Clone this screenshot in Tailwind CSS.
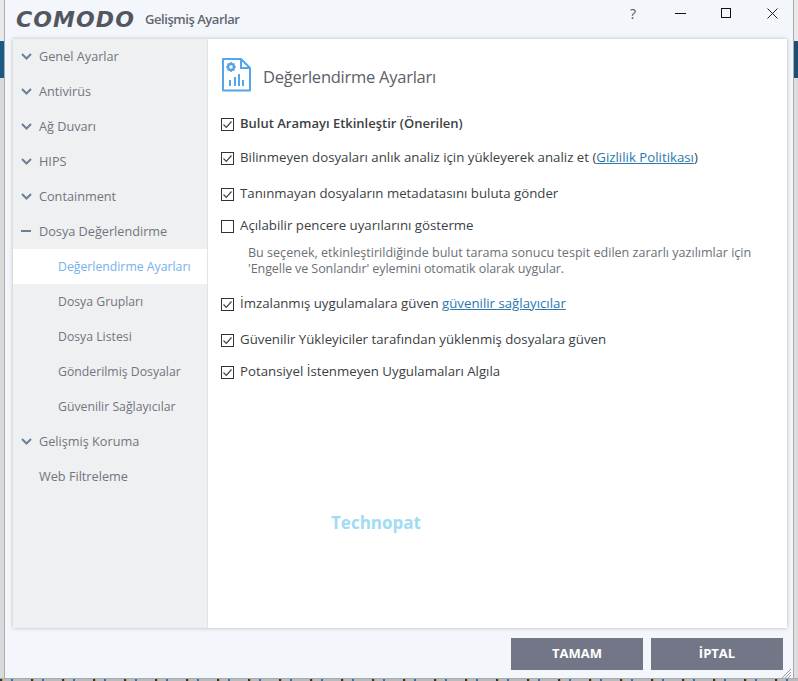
<!DOCTYPE html>
<html lang="tr">
<head>
  <meta charset="UTF-8" />
  <meta name="viewport" content="width=device-width, initial-scale=1.0" />
  <title>COMODO Gelişmiş Ayarlar</title>
  <script src="https://cdn.jsdelivr.net/npm/@tailwindcss/browser@4"></script>
</head>
<body class="bg-[#c4c6c8] font-['Open_Sans',sans-serif] overflow-hidden">
  <div class="relative w-[798px] h-[681px] flex flex-col overflow-hidden">
    <div class="flex h-[678px]">
      <!-- desktop behind the window, left -->
      <div class="w-[5px] flex flex-col shrink-0 border-r border-[#a9acaf]">
        <div class="h-[41px] bg-[#e9e9e9] border-t-[3px] border-[#e9e9e9]"></div>
        <div class="h-[37px] bg-[#1c5a85]"></div>
        <div class="flex-1 bg-[#d9dadb]"></div>
      </div>

      <!-- window -->
      <div class="relative w-[789px] bg-[#f3f7fb] flex flex-col shrink-0 border-r border-[#a9acaf]">
        <!-- title bar -->
        <div class="h-[39px] flex items-start pl-[11px] shrink-0">
          <span class="font-['DejaVu_Sans',sans-serif] font-bold italic text-[22px] leading-[39px] tracking-[1.1px] text-[#54565f]">COMODO</span>
          <span class="ml-[10px] mt-[10px] text-[13px] leading-[18px] font-semibold text-[#62666f] tracking-[-0.45px]">Gelişmiş Ayarlar</span>
          <div class="ml-auto flex items-center h-[26px] text-[#333]">
            <span class="text-[14px] text-[#555] mr-[39px]">?</span>
            <svg class="mr-[35px]" width="11" height="3" viewBox="0 0 11 3"><rect y="1" width="11" height="1" fill="#111"/></svg>
            <svg class="mr-[36px]" width="10" height="10" viewBox="0 0 10 10"><rect x="0.5" y="0.5" width="9" height="9" fill="none" stroke="#111"/></svg>
            <svg class="mr-[15px]" width="11" height="11" viewBox="0 0 11 11"><path d="M0.5 0.5L10.5 10.5M10.5 0.5L0.5 10.5" stroke="#222" fill="none"/></svg>
          </div>
        </div>

        <!-- panel -->
        <div class="ml-[8px] w-[774px] h-[589px] flex bg-white shadow-[0_0_4px_rgba(0,0,0,0.25)] shrink-0">
          <!-- sidebar -->
          <nav class="w-[195px] bg-[#eff0f2] border-r border-[#e2e3e5] text-[12.7px] text-[#71757f] shrink-0">
            <div class="h-[35px] flex items-center pl-[8px] gap-[7px]"><svg width="11" height="7" viewBox="0 0 11 7"><path d="M1 1l4.5 4.5L10 1" fill="none" stroke="#6c8093" stroke-width="2"/></svg><span>Genel Ayarlar</span></div>
            <div class="h-[35px] flex items-center pl-[8px] gap-[7px]"><svg width="11" height="7" viewBox="0 0 11 7"><path d="M1 1l4.5 4.5L10 1" fill="none" stroke="#6c8093" stroke-width="2"/></svg><span>Antivirüs</span></div>
            <div class="h-[35px] flex items-center pl-[8px] gap-[7px]"><svg width="11" height="7" viewBox="0 0 11 7"><path d="M1 1l4.5 4.5L10 1" fill="none" stroke="#6c8093" stroke-width="2"/></svg><span>Ağ Duvarı</span></div>
            <div class="h-[35px] flex items-center pl-[8px] gap-[7px]"><svg width="11" height="7" viewBox="0 0 11 7"><path d="M1 1l4.5 4.5L10 1" fill="none" stroke="#6c8093" stroke-width="2"/></svg><span>HIPS</span></div>
            <div class="h-[35px] flex items-center pl-[8px] gap-[7px]"><svg width="11" height="7" viewBox="0 0 11 7"><path d="M1 1l4.5 4.5L10 1" fill="none" stroke="#6c8093" stroke-width="2"/></svg><span>Containment</span></div>
            <div class="h-[35px] flex items-center pl-[8px] gap-[7px]"><svg width="11" height="7" viewBox="0 0 11 7"><rect y="2" width="10" height="2" fill="#6c8093"/></svg><span>Dosya Değerlendirme</span></div>
            <div class="h-[35px] flex items-center pl-[45px] pt-[1px] bg-white text-[#76b0ee] text-[12.25px]">Değerlendirme Ayarları</div>
            <div class="h-[35px] flex items-center pl-[45px] pt-[1px] text-[12.25px]">Dosya Grupları</div>
            <div class="h-[35px] flex items-center pl-[45px] pt-[1px] text-[12.25px]">Dosya Listesi</div>
            <div class="h-[35px] flex items-center pl-[45px] pt-[1px] text-[12.25px]">Gönderilmiş Dosyalar</div>
            <div class="h-[35px] flex items-center pl-[45px] pt-[1px] text-[12.25px]">Güvenilir Sağlayıcılar</div>
            <div class="h-[35px] flex items-center pl-[8px] gap-[7px]"><svg width="11" height="7" viewBox="0 0 11 7"><path d="M1 1l4.5 4.5L10 1" fill="none" stroke="#6c8093" stroke-width="2"/></svg><span>Gelişmiş Koruma</span></div>
            <div class="h-[35px] flex items-center pl-[26px]">Web Filtreleme</div>
          </nav>

          <!-- content -->
          <section class="flex-1 pl-[13px] pt-[19px] text-[13.25px] text-[#3c3f44]">
            <div class="flex items-center h-[34px]">
              <svg class="shrink-0" width="30" height="34" viewBox="0 0 30 34">
                <path d="M2 1H20L29 10V32.500H2Z" fill="none" stroke="#55a5ec" stroke-width="2" stroke-linejoin="round"/>
                <path d="M20 1.500V10H28.500" fill="none" stroke="#55a5ec" stroke-width="2"/>
                <circle cx="10" cy="9" r="3" fill="none" stroke="#55a5ec" stroke-width="2.4"/>
                <path d="M10 4v2M10 12v2M5 9h2M13 9h2M6.500 5.500l1.400 1.400M12.100 11.100l1.400 1.400M13.500 5.500l-1.400 1.400M7.900 11.100l-1.400 1.400" stroke="#55a5ec" stroke-width="1.600"/>
                <rect x="8" y="22" width="2" height="6" fill="#55a5ec"/>
                <rect x="13" y="19" width="2" height="9" fill="#55a5ec"/>
                <rect x="17" y="16" width="2" height="12" fill="#55a5ec"/>
                <rect x="21" y="22" width="2" height="6" fill="#55a5ec"/>
              </svg>
              <h1 class="ml-[12px] mt-[4px] text-[16.500px] tracking-[-0.25px] text-[#5c6068]">Değerlendirme Ayarları</h1>
            </div>

            <label class="mt-[22px] h-[20px] flex items-center font-semibold text-[13px]"><svg class="shrink-0 mr-[6px]" width="13" height="13" viewBox="0 0 13 13"><rect x="0.5" y="0.5" width="12" height="12" fill="#fff" stroke="#333"/><path d="M2.500 6.500l2.800 2.800L10.500 3.500" fill="none" stroke="#444" stroke-width="1.200"/></svg>Bulut Aramayı Etkinleştir (Önerilen)</label>
            <label class="mt-[14px] h-[20px] flex items-center"><svg class="shrink-0 mr-[6px]" width="13" height="13" viewBox="0 0 13 13"><rect x="0.5" y="0.5" width="12" height="12" fill="#fff" stroke="#333"/><path d="M2.500 6.500l2.800 2.800L10.500 3.500" fill="none" stroke="#444" stroke-width="1.200"/></svg>Bilinmeyen dosyaları anlık analiz için yükleyerek analiz et (<a class="text-[#2b78ae] underline">Gizlilik Politikası</a>)</label>
            <label class="mt-[16px] h-[20px] flex items-center"><svg class="shrink-0 mr-[6px]" width="13" height="13" viewBox="0 0 13 13"><rect x="0.5" y="0.5" width="12" height="12" fill="#fff" stroke="#333"/><path d="M2.500 6.500l2.800 2.800L10.500 3.500" fill="none" stroke="#444" stroke-width="1.200"/></svg>Tanınmayan dosyaların metadatasını buluta gönder</label>
            <label class="mt-[12px] h-[20px] flex items-center"><svg class="shrink-0 mr-[6px]" width="13" height="13" viewBox="0 0 13 13"><rect x="0.5" y="0.5" width="12" height="12" fill="#fff" stroke="#333"/></svg>Açılabilir pencere uyarılarını gösterme</label>
            <p class="mt-[9px] ml-[27px] text-[12.570px] leading-[16px] text-[#6b6f76]">Bu seçenek, etkinleştirildiğinde bulut tarama sonucu tespit edilen zararlı yazılımlar için<br /><span class="tracking-[-0.1px]">'Engelle ve Sonlandır' eylemini otomatik olarak uygular.</span></p>
            <label class="mt-[17px] h-[20px] flex items-center"><svg class="shrink-0 mr-[6px]" width="13" height="13" viewBox="0 0 13 13"><rect x="0.5" y="0.5" width="12" height="12" fill="#fff" stroke="#333"/><path d="M2.500 6.500l2.800 2.800L10.500 3.500" fill="none" stroke="#444" stroke-width="1.200"/></svg>İmzalanmış uygulamalara güven&nbsp;<a class="text-[#2b78ae] underline">güvenilir sağlayıcılar</a></label>
            <label class="mt-[16px] h-[20px] flex items-center"><svg class="shrink-0 mr-[6px]" width="13" height="13" viewBox="0 0 13 13"><rect x="0.5" y="0.5" width="12" height="12" fill="#fff" stroke="#333"/><path d="M2.500 6.500l2.800 2.800L10.500 3.500" fill="none" stroke="#444" stroke-width="1.200"/></svg>Güvenilir Yükleyiciler tarafından yüklenmiş dosyalara güven</label>
            <label class="mt-[12px] h-[20px] flex items-center"><svg class="shrink-0 mr-[6px]" width="13" height="13" viewBox="0 0 13 13"><rect x="0.5" y="0.5" width="12" height="12" fill="#fff" stroke="#333"/><path d="M2.500 6.500l2.800 2.800L10.500 3.500" fill="none" stroke="#444" stroke-width="1.200"/></svg>Potansiyel İstenmeyen Uygulamaları Algıla</label>
          </section>
        </div>

        <!-- buttons -->
        <div class="flex justify-end gap-[8px] pt-[10px] pr-[10px]">
          <button class="w-[132px] h-[32px] bg-[#737687] text-white text-[13px] font-bold">TAMAM</button>
          <button class="w-[132px] h-[32px] bg-[#737687] text-white text-[13px] font-bold">İPTAL</button>
        </div>
        <svg class="absolute right-[2px] bottom-[0px]" width="9" height="9" viewBox="0 0 9 9"><path d="M0 9L9 0M3 9L9 3M6 9L9 6" stroke="#9a9ea3" fill="none"/></svg>
      </div>

      <!-- desktop behind the window, right -->
      <div class="flex-1 flex flex-col">
        <div class="h-[41px] bg-[#e9e9e9]"></div>
        <div class="h-[37px] bg-[#1c4f78]"></div>
        <div class="flex-1 bg-[#dcdddf]"></div>
      </div>
    </div>
    <!-- taskbar text peeking out under the window -->
    <div class="h-[3px] bg-[#b9bbbd] border-t border-[#a9acaf] bg-[repeating-linear-gradient(90deg,#333_0,#333_2px,#c49a3c_2px,#c49a3c_3px,#b9bbbd_3px,#b9bbbd_11px,#3b6fa0_11px,#3b6fa0_13px,#b9bbbd_13px,#b9bbbd_31px)]"></div>

    <!-- watermark -->
    <span class="absolute left-[331px] top-[510px] text-[17px] leading-[26px] font-bold text-[#a1dcf2]">Technopat</span>
  </div>
</body>
</html>
